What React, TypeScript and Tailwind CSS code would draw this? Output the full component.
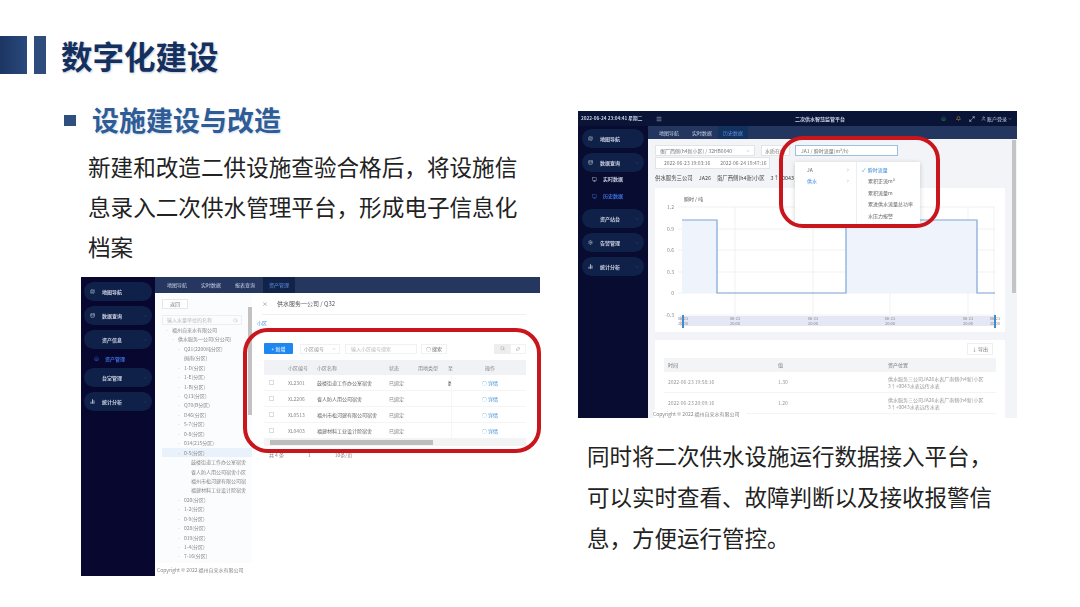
import { ChevronDown, ChevronRight, Search, RefreshCw, Maximize2, Bell, Home, User, Menu, Map, Database, Monitor, Settings, BarChart2 } from 'lucide-react'

const treeA = [
  { t: '福州自来水有限公司', i: 17, dot: true },
  { t: '供水服务一公司(分公司)', i: 23, dot: true },
  { t: 'Q21(2200吨分区)', i: 29, dot: true },
  { t: '闽南(分区)', i: 29 },
  { t: '1-D(分区)', i: 29, dot: true },
  { t: '1-E(分区)', i: 29, dot: true },
  { t: '1-B(分区)', i: 29, dot: true },
  { t: 'Q13(分区)', i: 29, dot: true },
  { t: 'Q70(B分区)', i: 29, dot: true },
  { t: 'D46(分区)', i: 29, dot: true },
  { t: '5-7(分区)', i: 29, dot: true },
  { t: '0-8(分区)', i: 29, dot: true },
  { t: '014(215分区)', i: 29, dot: true },
  { t: '0-5(分区)', i: 29, dot: true, active: true },
  { t: '鼓楼街道工作办公室宿舍', i: 36 },
  { t: '省人防人用公司宿舍小区', i: 36 },
  { t: '福州市松河建有限公司宿', i: 36 },
  { t: '福建材料工业设计院宿舍', i: 36 },
  { t: '020(分区)', i: 29, dot: true },
  { t: '1-2(分区)', i: 29, dot: true },
  { t: '0-9(分区)', i: 29, dot: true },
  { t: '028(分区)', i: 29, dot: true },
  { t: '019(分区)', i: 29, dot: true },
  { t: '1-4(分区)', i: 29, dot: true },
  { t: '7-16(分区)', i: 29, dot: true },
  { t: '1-1(分区)', i: 29, dot: true },
]

const rowsA = [
  ['XL2301', '鼓楼街道工作办公室宿舍', '已绑定', '数'],
  ['XL2206', '省人防人用公司宿舍', '已绑定', ''],
  ['XL0513', '福州市松河建有限公司宿舍', '已绑定', ''],
  ['XL0403', '福建材料工业设计院宿舍', '已绑定', ''],
]

function SidePill({ label, icon, arrow = false }: { label: string; icon?: React.ReactNode; arrow?: boolean }) {
  return (
    <div className="flex h-[19px] shrink-0 items-center rounded-full bg-[#0f2148] pl-[6px] pr-[5px] text-[5px] font-bold text-[#c9d0e2]">
      <span className="flex w-[12px] items-center text-[#c9d0e2]">{icon}</span>
      <span className="flex-1">{label}</span>
      {arrow && <ChevronDown size={4} className="text-[#52628a]" />}
    </div>
  )
}

function InventoryShot() {
  return (
    <div className="relative flex h-[299px] w-[459px] bg-white blur-[0.5px]">
      <div className="flex w-[74px] shrink-0 flex-col gap-[5px] bg-[#07072f] px-[3px] pt-[5px]">
        <SidePill label="地图导航" icon={<Map size={5} />} />
        <SidePill label="数据查询" icon={<Database size={5} />} arrow />
        <SidePill label="资产信息" arrow />
        <div className="-my-[2px] flex h-[13px] items-center pl-[10px] text-[5px] font-bold text-[#3c6fd8]">
          <Home size={5} className="mr-[6px]" />
          资产管理
        </div>
        <SidePill label="台室管理" arrow />
        <SidePill label="统计分析" icon={<BarChart2 size={5} strokeWidth={4} />} arrow />
      </div>

      <div className="flex min-w-0 flex-1 flex-col">
        <div className="flex h-[16px] shrink-0 items-stretch gap-[14px] bg-[#25365f] pl-[12px] text-[5px] text-[#c7d0e4]">
          <span className="flex items-center">地图导航</span>
          <span className="flex items-center">实时数据</span>
          <span className="flex items-center">报表查询</span>
          <span className="-ml-[6px] flex items-center bg-[#12234a] px-[6px] text-[#5f8ee0]">资产管理</span>
        </div>

        <div className="flex min-h-0 flex-1">
          <div className="relative w-[97px] shrink-0 overflow-hidden bg-[#fbfcfd] pl-[7px] pt-[6px] text-[5px] text-[#888]">
            <div className="flex h-[10px] w-[26px] items-center justify-center border border-[#e5e7eb] bg-white">返回</div>
            <div className="mt-[6px] flex h-[10px] w-[80px] items-center justify-between border border-[#eceef1] pl-[4px] pr-[3px] text-[#bbb]">
              输入水量单位的名称
              <Search size={5} />
            </div>
            <div className="-ml-[7px] flex flex-col">
              {treeA.map((n) => (
                <div
                  key={n.t}
                  className={`ml-[7px] flex h-[9.45px] items-center whitespace-nowrap ${n.active ? 'bg-[#e9f1fa]' : ''}`}
                  style={{ paddingLeft: n.i - 7 }}
                >
                  {n.dot && <span className="-ml-[6px] w-[6px] text-[#aaa]">-</span>}
                  {n.t}
                </div>
              ))}
            </div>
            <div className="absolute right-[0px] top-[14px] h-[108px] w-[4px] bg-[#c2c2c2]" />
          </div>

          <div className="flex min-w-0 flex-1 flex-col pl-[10px] pr-[14px]">
            <div className="flex h-[22px] shrink-0 items-center border-b border-[#eef0f3] text-[6px] text-[#555]">
              <span className="mr-[9px] text-[#888]">×</span>
              供水服务一公司 / Q32
            </div>
            <div className="-ml-[5px] flex h-[16px] shrink-0 items-center text-[5px] text-[#4a90d9]">小区</div>
            <div className="mt-[12px] flex h-[11px] shrink-0 items-center pl-[2px] text-[5px] text-[#999]">
              <div className="flex h-[11px] w-[29px] items-center justify-center rounded-[1px] bg-[#1e88f0] text-white">+ 新增</div>
              <div className="ml-[7px] flex h-[10px] w-[40px] items-center justify-between border border-[#f0f1f3] px-[3px]">
                小区编号
                <ChevronDown size={4} />
              </div>
              <div className="ml-[5px] flex h-[10px] w-[72px] items-center border border-[#f0f1f3] px-[5px] text-[#bbb]">输入小区编号搜索</div>
              <div className="ml-[4px] flex h-[10px] w-[26px] items-center justify-center border border-[#f0f1f3] text-[#666]">○ 搜索</div>
              <div className="ml-auto flex h-[10px] w-[16px] items-center justify-center bg-[#eeeeee]">
                <Search size={5} />
              </div>
              <div className="flex h-[10px] w-[16px] items-center justify-center border border-[#f2f2f2]">
                <RefreshCw size={4} />
              </div>
            </div>
            <div className="ml-[2px] mt-[6px] flex flex-col text-[5px] text-[#888]">
              <div className="flex h-[15px] items-center bg-[#f0f2f5]">
                <span className="w-[24px]" />
                <span className="w-[29px]">小区编号</span>
                <span className="w-[72px]">小区名称</span>
                <span className="w-[29px]">状态</span>
                <span className="w-[30px]">用地类型</span>
                <span className="w-[37px]">至</span>
                <span>操作</span>
              </div>
              {rowsA.map((r) => (
                <div key={r[0]} className="flex h-[16px] items-center border-b border-[#f3f4f6]">
                  <span className="w-[24px] pl-[5px]">
                    <span className="block h-[5px] w-[5px] border border-[#ddd]" />
                  </span>
                  <span className="w-[29px]">{r[0]}</span>
                  <span className="w-[72px] whitespace-nowrap text-[#666]">{r[1]}</span>
                  <span className="w-[29px]">{r[2]}</span>
                  <span className="w-[30px]" />
                  <span className="w-[3px] overflow-hidden whitespace-nowrap text-[#555]">{r[3]}</span>
                  <span className="flex h-full items-center border-l border-[#f6f6f6] pl-[30px] text-[#3d8ed8]">○ 详情</span>
                </div>
              ))}
              <div className="flex h-[7px] items-center bg-[#f3f3f3] pl-[6px] pr-[93px]">
                <span className="block h-[5px] w-full bg-[#bdbdbd]" />
              </div>
            </div>
            <div className="ml-[7px] mt-[5px] flex items-center gap-[24px] text-[5px] text-[#888]">
              <span>共 4 条</span>
              <span>1</span>
              <span>10条/页</span>
            </div>
          </div>
        </div>
        <div className="flex h-[13px] shrink-0 items-center pl-[2px] text-[5px] text-[#888]">Copyright © 2022 福州自来水有限公司</div>
      </div>
    </div>
  )
}

function TrendChart() {
  const ys = [
    { l: '1.2', y: 19 },
    { l: '0.9', y: 41 },
    { l: '0.6', y: 62 },
    { l: '0.3', y: 84 },
    { l: '0', y: 105 },
    { l: '-0.3', y: 127 },
  ]
  return (
    <svg viewBox="0 0 350 144" className="h-[144px] w-[350px] bg-white">
      <text x="29" y="13" fontSize="5" fill="#555">瞬时 / 吨</text>
      {ys.map((g) => (
        <g key={g.l}>
          <line x1="23" x2="340" y1={g.y} y2={g.y} stroke="#e8e8e8" strokeWidth="0.6" />
          <text x="19" y={g.y + 2} textAnchor="end" fontSize="5" fill="#888">{g.l}</text>
        </g>
      ))}
      {[80, 158, 235, 313, 339].map((x) => (
        <line key={x} x1={x} x2={x} y1="19" y2="127" stroke="#e8e8e8" strokeWidth="0.6" />
      ))}
      <path d="M27 32H62V105H27Z M191 32H322V105H191Z" fill="#eff4fc" />
      <path d="M27 32H62V105H191V32H322V105H340" fill="none" stroke="#7da6d6" strokeWidth="1.2" />
      <rect x="25" y="128" width="315" height="10" fill="#e6e7f4" />
      {[28, 80, 158, 235, 313, 340].map((x) => (
        <g key={x}>
          <text x={x} y="132" textAnchor="middle" fontSize="4" fill="#888">06-23</text>
          <text x={x} y="137" textAnchor="middle" fontSize="4" fill="#888">20:00</text>
        </g>
      ))}
      <rect x="27" y="127" width="2" height="13" fill="#3f8dcc" />
      <rect x="339" y="127" width="2" height="13" fill="#3f8dcc" />
    </svg>
  )
}

function HistoryShot() {
  return (
    <div className="relative flex h-[307px] w-[439px] flex-col bg-[#f2f4f7] blur-[0.5px]">
      <div className="flex h-[15px] shrink-0 items-center bg-[#0a1437] pl-[3px] pr-[5px] text-[5px] text-[#c7d0e4]">
        <span className="w-[75px] whitespace-nowrap text-[4.7px] font-bold">2022-06-24 23:04:41 星期二</span>
        <Menu size={6} />
        <span className="ml-[133px] font-bold">二次供水智慧监管平台</span>
        <Home size={5} className="ml-auto text-[#2c9a66]" />
        <Bell size={5} className="ml-[10px] text-[#f0b94a]" />
        <Maximize2 size={6} className="ml-[8px] text-[#dfe6f5]" />
        <User size={5} className="ml-[6px]" />
        <span className="ml-[1px]">账户登录</span>
        <ChevronDown size={4} className="ml-[1px]" />
      </div>

      <div className="flex min-h-0 flex-1">
        <div className="flex w-[70px] shrink-0 flex-col gap-[5px] bg-[#070c30] px-[4px] pt-[3px]">
          <SidePill label="地图导航" icon={<Map size={5} />} />
          <SidePill label="数据查询" icon={<Database size={5} />} arrow />
          <div className="-mt-[4px] flex h-[12px] shrink-0 items-center pl-[10px] text-[5px] font-bold text-[#c9d0e2]">
            <Monitor size={5} className="mr-[6px]" />
            实时数据
          </div>
          <div className="mb-[2px] flex h-[12px] shrink-0 items-center pl-[10px] text-[5px] font-bold text-[#3c6fd8]">
            <Monitor size={5} className="mr-[6px]" />
            历史数据
          </div>
          <SidePill label="资产站台" arrow />
          <SidePill label="告警管理" icon={<Settings size={5} />} arrow />
          <SidePill label="统计分析" icon={<BarChart2 size={5} strokeWidth={4} />} arrow />
        </div>

        <div className="relative flex min-w-0 flex-1 flex-col">
          <div className="flex h-[13px] shrink-0 items-stretch gap-[13px] bg-[#22365f] pl-[11px] text-[5px] text-[#c7d0e4]">
            <span className="flex items-center">地图导航</span>
            <span className="flex items-center">实时数据</span>
            <span className="-ml-[7px] flex items-center bg-[#12335f] px-[5px] text-[#5f8ee0]">历史数据</span>
          </div>

          <div className="flex min-h-0 flex-1 flex-col pl-[7px] pr-[12px] text-[5px] text-[#777]">
            <div className="mt-[6px] flex h-[11px] shrink-0 gap-[6px]">
              <div className="flex w-[100px] items-center justify-between border border-[#e2e4e8] bg-white px-[4px]">
                蛋厂西侧(h4新小区) / 32HB0040
                <ChevronDown size={4} />
              </div>
              <div className="flex w-[29px] items-center border border-[#e2e4e8] bg-white px-[3px]">水质在线</div>
              <div className="ml-[-1px] flex w-[103px] items-center border border-[#9cc0e0] bg-white px-[5px]">JA1 / 瞬时流量(m³/h)</div>
            </div>
            <div className="mt-[1px] flex h-[12px] w-[115px] shrink-0 items-center gap-[10px] border border-[#e2e4e8] bg-white px-[8px]">
              <span className="whitespace-nowrap">2022-06-23 19:03:16</span>
              <span className="whitespace-nowrap">2022-06-24 19:47:16</span>
            </div>
            <div className="mt-[3px] flex h-[13px] shrink-0 items-center gap-[6px] whitespace-nowrap text-[5.4px] text-[#444]">
              <span>供水服务三公司</span>
              <span>JA26</span>
              <span>蛋厂西侧(h4新)小区</span>
              <span>3↑+0043</span>
            </div>
            <div className="mt-[3px] shrink-0">
              <TrendChart />
            </div>
            <div className="mt-[8px] flex min-h-0 flex-1 flex-col bg-white px-[9px]">
              <div className="flex h-[18px] shrink-0 items-center justify-end pr-[3px]">
                <span className="border border-[#efefef] px-[4px] py-[1px]">↓ 导出</span>
              </div>
              <div className="flex h-[14px] shrink-0 items-center bg-[#f3f4f6] pl-[4px]">
                <span className="w-[110px]">时间</span>
                <span className="w-[110px]">值</span>
                <span>资产位置</span>
              </div>
              {[
                ['2022-06-23 19:58:16', '1.30'],
                ['2022-06-23 20:09:16', '1.20'],
              ].map((r) => (
                <div key={r[0]} className="flex h-[21px] shrink-0 items-center border-b border-[#f3f4f6] pl-[4px] text-[#999]">
                  <span className="w-[110px]">{r[0]}</span>
                  <span className="w-[110px]">{r[1]}</span>
                  <span className="w-[105px] leading-[7px]">供水服务三公司JA26水表厂南侧(h4新)小区3↑+0043水表远传水表</span>
                </div>
              ))}
            </div>
          </div>
          <div className="absolute right-[1px] top-[14px] h-[153px] w-[4px] bg-[#c4c4c4]" />
          <div className="absolute bottom-[1px] left-[5px] bg-white pr-[6px] text-[5px] text-[#888]">Copyright © 2022 福州自来水有限公司</div>

          <div className="absolute left-[147px] top-[36px] flex h-[62px] w-[125px] bg-white text-[5px] text-[#666] shadow-[0_1px_5px_rgba(0,0,0,0.18)]">
            <div className="flex w-[62px] flex-col border-r border-[#eceef1] pl-[12px] pr-[6px] pt-[2px]">
              <div className="flex h-[11px] items-center justify-between">
                JA
                <ChevronRight size={4} />
              </div>
              <div className="flex h-[11px] items-center justify-between text-[#3d8ed8]">
                供水
                <ChevronRight size={4} />
              </div>
            </div>
            <div className="flex flex-1 flex-col gap-[0.5px] pl-[5px] pt-[2px] whitespace-nowrap">
              <div className="flex h-[11px] items-center text-[#3d8ed8]">✓&nbsp;&nbsp;瞬时流量</div>
              <div className="flex h-[11px] items-center pl-[6px]">累积正流m³</div>
              <div className="flex h-[11px] items-center pl-[6px]">累积流量m</div>
              <div className="flex h-[11px] items-center pl-[6px]">累进供水流量总功率</div>
              <div className="flex h-[11px] items-center pl-[6px]">水压力报警</div>
            </div>
          </div>
        </div>
      </div>
    </div>
  )
}

export default function App() {
  return (
    <div className="flex h-[607px] w-[1080px] overflow-hidden bg-white font-['Noto_Sans_CJK_SC','Liberation_Sans',sans-serif]">
      <div className="relative flex w-[578px] shrink-0 flex-col">
        <div className="mt-[36px] flex h-[38px] items-center">
          <div className="h-[38px] w-[27px] bg-gradient-to-r from-[#1c3563] to-[#2a4a7d]" />
          <div className="ml-[7px] h-[38px] w-[12px] bg-[#2f4d7c]" />
          <h1 className="ml-[15px] text-[31.5px] leading-[38px] font-bold text-[#14305f] [text-shadow:1px_1px_2px_rgba(20,48,95,0.25)]">数字化建设</h1>
        </div>
        <div className="ml-[64px] mt-[27px] flex h-[38px] items-center">
          <div className="h-[11px] w-[12px] bg-[#2f4f7f]" />
          <h2 className="ml-[16px] text-[27px] leading-[38px] font-bold text-[#2e5c96] [text-shadow:1px_1px_2px_rgba(46,92,150,0.2)]">设施建设与改造</h2>
        </div>
        <p className="ml-[88px] mt-[8px] w-[436px] text-[22.6px] leading-[40px] text-[#222]">
          新建和改造二供设施查验合格后，将设施信息录入二次供水管理平台，形成电子信息化档案
        </p>
        <div className="ml-[81px] mt-[10px]">
          <InventoryShot />
        </div>
        <div className="absolute left-[243px] top-[328px] h-[125px] w-[298px] rounded-[25px] border-[4px] border-[#c9151c]" />
      </div>
      <div className="relative flex min-w-0 flex-1 flex-col pt-[111px]">
        <HistoryShot />
        <p className="ml-[9px] mt-[17px] w-[410px] text-[22.5px] leading-[41px] text-[#222]">
          同时将二次供水设施运行数据接入平台，可以实时查看、故障判断以及接收报警信息，方便运行管控。
        </p>
        <div className="absolute left-[201px] top-[136px] h-[92px] w-[161px] rounded-[24px] border-[4px] border-[#c9151c]" />
      </div>
    </div>
  )
}
